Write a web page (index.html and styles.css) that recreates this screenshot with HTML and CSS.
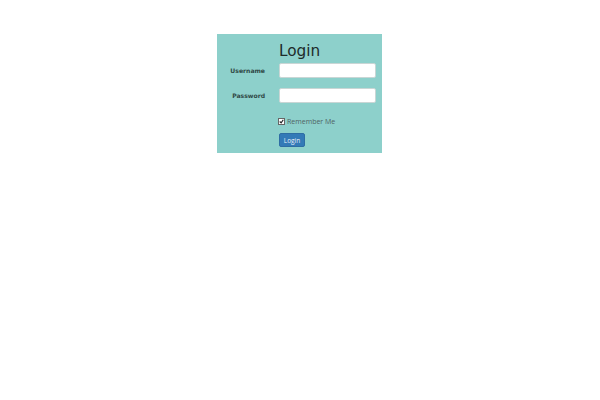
FILE: index.html
```html
<!DOCTYPE html>
<html>
<head>
<meta charset="utf-8">
<link rel="stylesheet" href="styles.css">
</head>
<body>
<div class="panel">
  <div class="row title-row">
    <div class="label"></div>
    <h1 class="title">Login</h1>
  </div>
  <div class="row">
    <label class="label">Username</label>
    <input class="field" type="text">
  </div>
  <div class="row">
    <label class="label">Password</label>
    <input class="field" type="password">
  </div>
  <div class="row remember-row">
    <div class="label"></div>
    <span class="remember"><span class="check"><svg width="5" height="5" viewBox="0 0 7 7"><path d="M1 3.5 L3 5.5 L6 1" fill="none" stroke="#222" stroke-width="1.6"/></svg></span>Remember Me</span>
  </div>
  <div class="row button-row">
    <div class="label"></div>
    <button class="btn">Login</button>
  </div>
</div>
</body>
</html>
```
FILE: styles.css
```css
html, body { margin: 0; padding: 0; background: #fff; }
body { font-family: "DejaVu Sans", Verdana, sans-serif; }
.panel {
  margin: 34px 0 0 217px;
  width: 165px;
  height: 119px;
  box-sizing: border-box;
  background: #8dd0cb;
  padding: 7px 6px 0 0;
}
.row { display: flex; align-items: center; }
.label {
  width: 62px;
  flex: none;
  box-sizing: border-box;
  padding-right: 14px;
  text-align: right;
  font-size: 6.1px;
  font-weight: bold;
  color: #2f4845;
}
.title {
  margin: 0;
  font-weight: normal;
  font-size: 15.3px;
  line-height: 21px;
  color: #1d2b2a;
}
.title-row { margin-bottom: 1px; }
.field {
  width: 97px;
  height: 15px;
  box-sizing: border-box;
  margin: 0;
  border: 1px solid #c9d6d5;
  border-radius: 2px;
  background: #fff;
  padding: 0;
}
.row + .row:nth-child(3) { margin-top: 10px; }
.remember-row { margin-top: 14px; }
.remember {
  display: flex;
  align-items: center;
  font-family: "Open Sans", sans-serif;
  font-size: 7px;
  font-weight: normal;
  color: #4f6364;
  margin-left: -1px;
}
.check {
  width: 7px; height: 7px;
  background: #fff;
  border: 1px solid #666;
  box-sizing: border-box;
  display: inline-flex;
  align-items: center;
  justify-content: center;
  margin-right: 2px;
}
.check svg { width: 5px; height: 5px; }
.button-row { margin-top: 7px; }
.btn {
  width: 26px;
  height: 14px;
  margin: 0;
  padding: 0;
  border: 1px solid #2e6da4;
  border-radius: 2px;
  background: #337ab7;
  color: #e6eef7;
  font-family: "Open Sans", sans-serif;
  font-weight: normal;
  font-size: 6.5px;
}
```
